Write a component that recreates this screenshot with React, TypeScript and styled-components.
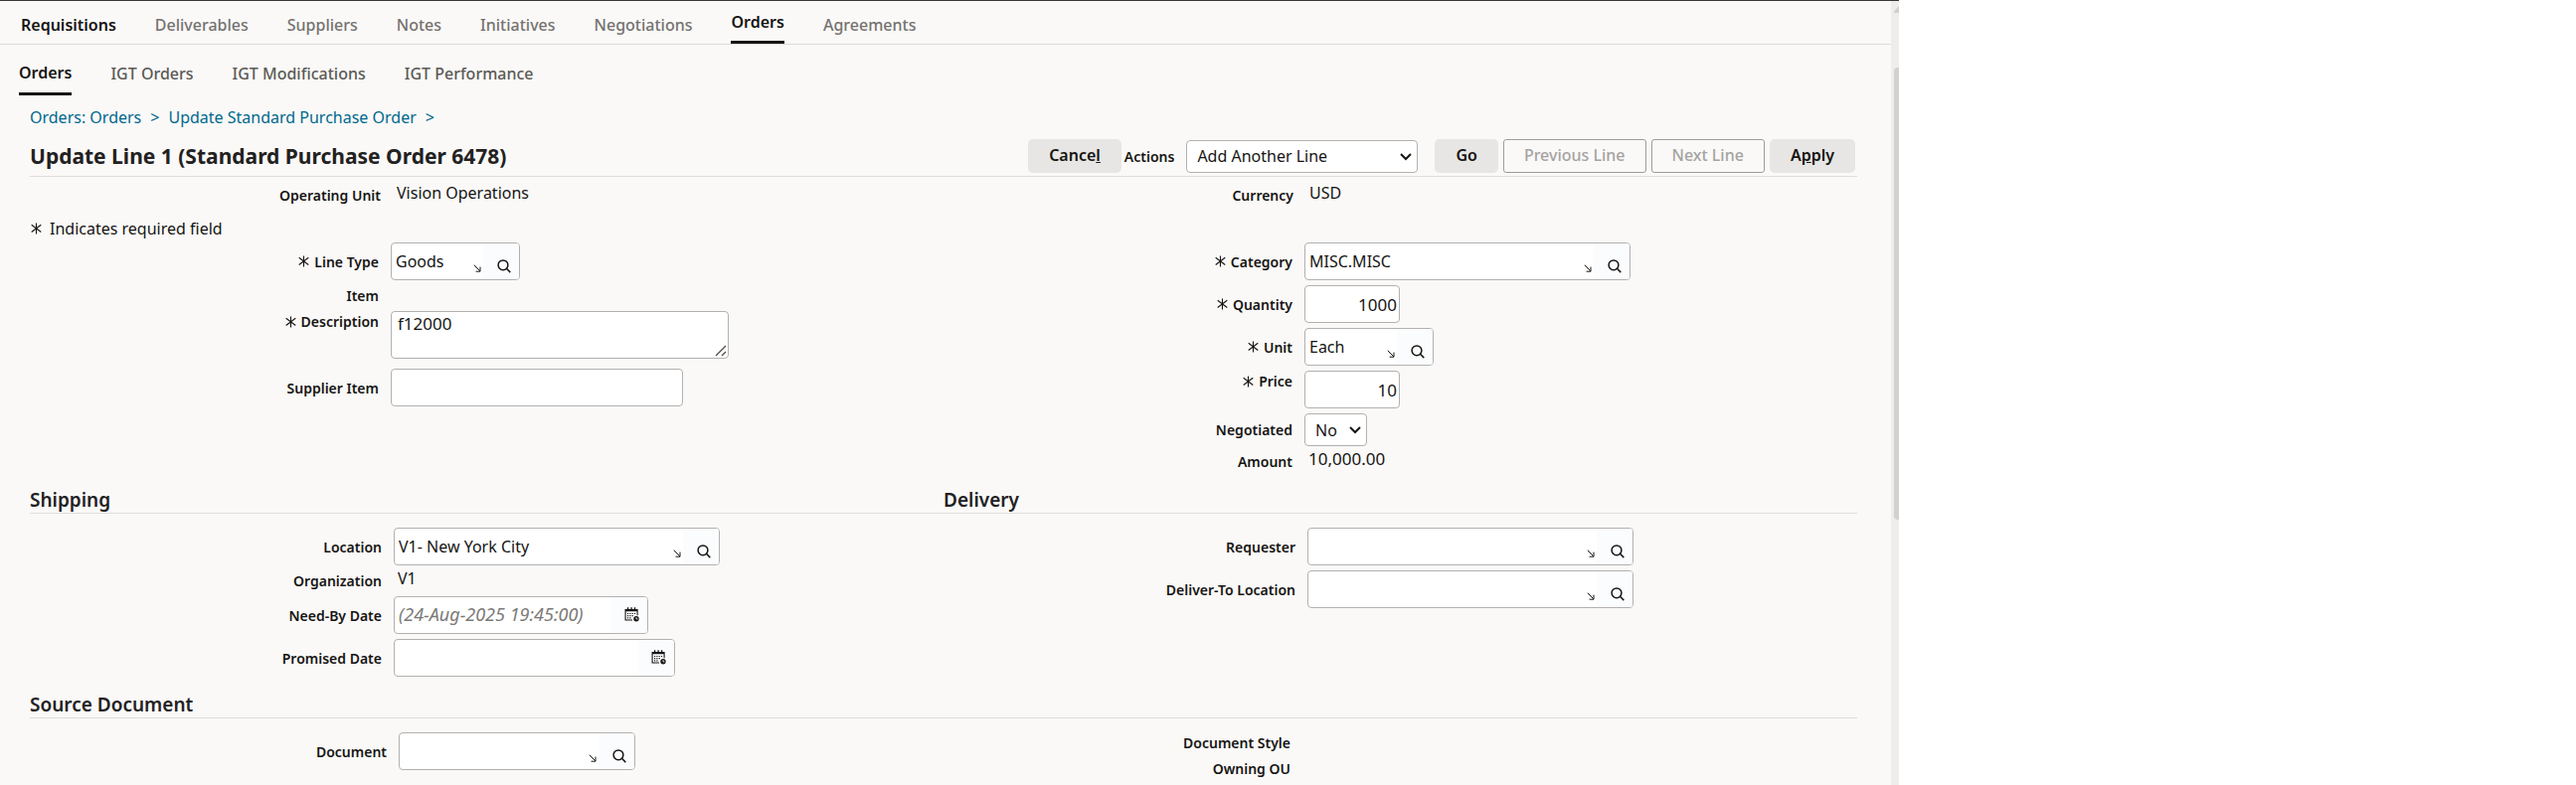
import React from 'react';
import styled, { createGlobalStyle, css } from 'styled-components';

const ink = '#161513';
const border = '#b3b1af';
const rule = '#dedddb';

const GlobalStyle = createGlobalStyle`
  *, *::before, *::after { box-sizing: border-box; }
  body {
    margin: 0;
    background: #ffffff;
    color: ${ink};
    font-family: "Noto Sans", "Open Sans", sans-serif;
    font-size: 16px;
    line-height: 20px;
  }
  button, input, select, textarea { font: inherit; color: inherit; margin: 0; }
  a { text-decoration: none; color: inherit; }
`;

const Shell = styled.div`
  display: flex;
  min-height: 100vh;
  max-width: 1910px;
  border-top: 1px solid #3a3636;
  background: #faf9f8;
`;

const Page = styled.div`
  flex: 1;
  min-width: 0;
`;

const Track = styled.div`
  display: flex;
  flex-direction: column;
  align-items: flex-end;
  width: 8px;
  padding-top: 5px;
  background: #eeedec;
`;

const TrackArrow = styled.svg`
  width: 5px;
  height: 7px;
  margin-bottom: 55px;
`;

const Thumb = styled.div`
  flex: 17;
  width: 5px;
  border-radius: 4px 0 0 4px;
  background: #d2d1cf;
`;

const TrackRest = styled.div`
  flex: 10;
`;

const TabBar = styled.nav`
  display: flex;
  gap: 39px;
  height: 44px;
  padding-left: 21px;
  border-bottom: 1px solid ${rule};
`;

const SubTabBar = styled.nav`
  display: flex;
  gap: 39px;
  height: 51px;
  padding-left: 19px;
`;

const Tab = styled.a<{ $active?: boolean; $strong?: boolean }>`
  padding-top: 14px;
  font-weight: 500;
  color: #75726f;
  white-space: nowrap;
  ${(p) => p.$strong && css`
    font-weight: 600;
    color: ${ink};
  `}
  ${(p) => p.$active && css`
    padding-top: 11px;
    border-bottom: 3px solid ${ink};
    font-weight: 600;
    color: ${ink};
  `}
`;

const SubTab = styled(Tab)`
  padding-top: ${(p) => (p.$active ? 18 : 19)}px;
  color: ${(p) => (p.$active ? ink : '#5b5956')};
`;

const Content = styled.main`
  padding: 12px 34px 0 30px;
`;

const Crumbs = styled.nav`
  display: flex;
  gap: 9px;
  color: #00688c;
`;

const Header = styled.header`
  display: flex;
  align-items: center;
  justify-content: space-between;
  margin-top: 12px;
  padding: 0 2px 3px 0;
  border-bottom: 1px solid ${rule};
`;

const Title = styled.h1`
  margin: 0;
  font-size: 21px;
  line-height: 34px;
  font-weight: 700;
  color: #22211f;
`;

const Actions = styled.div`
  display: flex;
  align-items: center;
  gap: 5px;
`;

const ActionPicker = styled.div`
  display: flex;
  align-items: center;
  gap: 12px;
  margin: 0 12px 0 -2px;
`;

const Button = styled.button`
  height: 34px;
  padding: 0 20px 2px;
  border: 1px solid transparent;
  border-radius: 5px;
  background: #e7e6e4;
  font-weight: 600;
  white-space: nowrap;

  &:disabled {
    border-color: #9f9d9b;
    border-radius: 3px;
    background: transparent;
    font-weight: 500;
    color: #a5a3a1;
  }
`;

const SelectFrame = styled.div<{ $width: number }>`
  position: relative;
  width: ${(p) => p.$width}px;
`;

const NativeSelect = styled.select`
  display: block;
  appearance: none;
  width: 100%;
  height: 33px;
  padding: 0 20px 0 10px;
  border: 1px solid ${border};
  border-radius: 4px;
  background: #ffffff;
`;

const Chevron = styled.svg`
  position: absolute;
  top: 13px;
  right: 6px;
  width: 12px;
  height: 8px;
  pointer-events: none;
`;

const Columns = styled.div<{ $top?: number }>`
  display: grid;
  grid-template-columns: 1fr 1fr;
  padding-top: ${(p) => p.$top ?? 14}px;
`;

const Column = styled.div<{ $label: number }>`
  --label-width: ${(p) => p.$label}px;
  display: flex;
  flex-direction: column;
  gap: 5px;
`;

const Row = styled.div<{ $align?: string }>`
  display: grid;
  grid-template-columns: var(--label-width) auto;
  justify-content: start;
  align-items: ${(p) => p.$align ?? 'center'};
  column-gap: 12px;
  min-height: 21px;
`;

const Label = styled.label`
  display: flex;
  align-items: center;
  justify-content: flex-end;
  gap: 5px;
  font-size: 14px;
  line-height: 21px;
  font-weight: 600;
  white-space: nowrap;
`;

const Value = styled.output`
  align-self: start;
  padding-left: 4px;
  line-height: 16px;
`;

const Amount = styled(Value)`
  font-size: 17px;
`;

const Note = styled.p`
  display: flex;
  align-items: center;
  gap: 8px;
  margin: 13px 0 4px;
  padding-left: 1px;
`;

const SectionHeads = styled.div`
  display: grid;
  grid-template-columns: 1fr 1fr;
  margin-top: 15px;
  border-bottom: 1px solid ${rule};
`;

const SectionTitle = styled.h2`
  margin: 0;
  font-size: 19px;
  line-height: 26px;
  font-weight: 600;
  color: #22211f;
`;

const Box = styled.div<{ $width: number }>`
  display: flex;
  width: ${(p) => p.$width}px;
  height: 38px;
  overflow: hidden;
  border: 1px solid ${border};
  border-radius: 4px;
  background: #ffffff;
`;

const BoxInput = styled.input`
  flex: 1;
  min-width: 0;
  padding: 0 4px;
  border: 0;
  outline: 0;
  background: transparent;

  &::placeholder {
    font-size: 18px;
    font-style: italic;
    color: #7b7976;
    opacity: 1;
  }
`;

const IconButton = styled.button<{ $low?: boolean }>`
  display: flex;
  align-items: ${(p) => (p.$low ? 'flex-end' : 'center')};
  justify-content: flex-end;
  width: 36px;
  padding: ${(p) => (p.$low ? '0 8px 6px 0' : '0 8px 2px 0')};
  border: 0;
  background: #fbfcfe;
`;

const Corner = styled.svg`
  align-self: flex-end;
  flex: none;
  width: 8px;
  height: 8px;
  margin: 0 2px 7px 0;
`;

const TextInput = styled.input<{ $width: number; $numeric?: boolean }>`
  width: ${(p) => p.$width}px;
  height: 38px;
  padding: 0 ${(p) => (p.$numeric ? 2 : 4)}px;
  border: 1px solid ${border};
  border-radius: 4px;
  background: #ffffff;
  font-size: ${(p) => (p.$numeric ? 17 : 16)}px;
  text-align: ${(p) => (p.$numeric ? 'right' : 'left')};
`;

const TextAreaFrame = styled.div`
  position: relative;
  margin-bottom: 5px;
`;

const TextArea = styled.textarea`
  display: block;
  width: 340px;
  height: 48px;
  padding: 2px 6px;
  border: 1px solid ${border};
  border-radius: 4px;
  background: #ffffff;
  font-size: 17px;
  resize: none;
`;

const Grip = styled.svg`
  position: absolute;
  right: 2px;
  bottom: 2px;
  width: 12px;
  height: 12px;
`;

const Star = () => (
  <svg width="11" height="12" viewBox="0 0 11 12" aria-hidden="true" fill="none" stroke={ink} strokeWidth="1.1">
    <path d="M5.5 0.5v11M0.7 2.3l9.6 7.2M10.3 2.3l-9.6 7.2" />
  </svg>
);

const SearchIcon = () => (
  <svg width="14" height="14" viewBox="0 0 14 14" aria-hidden="true" fill="none" stroke={ink} strokeWidth="1.5">
    <circle cx="6" cy="5.8" r="4.9" />
    <path d="M9.5 9.3l3.8 3.8" />
  </svg>
);

const CalendarIcon = () => (
  <svg width="15" height="15" viewBox="0 0 15 15" aria-hidden="true">
    <path d="M8 13H1.1V2.6h12v5.6" fill="none" stroke={ink} strokeWidth="1.1" />
    <path d="M1 3.6h12" stroke={ink} strokeWidth="1.4" />
    <path d="M3.6 0.3v3.4M7.1 0.3v3.4M10.6 0.3v3.4" stroke={ink} strokeWidth="1.3" />
    <path d="M3 6.5h8.8M3 8.7h6.6M3 10.9h4.6" stroke={ink} strokeWidth="1.2" strokeDasharray="1.2 1.1" />
    <circle cx="12" cy="11.8" r="2.7" fill={ink} />
    <path d="M12 10.2v1.8h1.4" fill="none" stroke="#fff" strokeWidth="0.8" />
  </svg>
);

interface FieldProps {
  id: string;
  label: string;
  required?: boolean;
  align?: string;
  children?: React.ReactNode;
}

const Field = ({ id, label, required, align, children }: FieldProps) => (
  <Row $align={align}>
    <Label htmlFor={id}>
      {required && <Star />}
      {label}
    </Label>
    {children ?? <Value id={id} />}
  </Row>
);

const Select = ({ id, width, options }: { id: string; width: number; options: string[] }) => (
  <SelectFrame $width={width}>
    <NativeSelect id={id}>
      {options.map((o) => (
        <option key={o}>{o}</option>
      ))}
    </NativeSelect>
    <Chevron viewBox="0 0 12 8" aria-hidden="true" fill="none" stroke={ink} strokeWidth="2">
      <path d="M1 1l5 5 5-5" />
    </Chevron>
  </SelectFrame>
);

const Lookup = ({ id, width, value = '' }: { id: string; width: number; value?: string }) => (
  <Box $width={width}>
    <BoxInput id={id} type="text" defaultValue={value} />
    <Corner viewBox="0 0 8 8" aria-hidden="true" fill="none" stroke={ink} strokeWidth="1">
      <path d="M0.8 0.8l6 6M7 2.6v4.6H2.6" />
    </Corner>
    <IconButton type="button" $low aria-label="Search">
      <SearchIcon />
    </IconButton>
  </Box>
);

const DateInput = ({ id, width, hint }: { id: string; width: number; hint?: string }) => (
  <Box $width={width}>
    <BoxInput id={id} type="text" placeholder={hint} />
    <IconButton type="button" aria-label="Pick date">
      <CalendarIcon />
    </IconButton>
  </Box>
);

const tabs = ['Requisitions', 'Deliverables', 'Suppliers', 'Notes', 'Initiatives', 'Negotiations', 'Orders', 'Agreements'];
const subTabs = ['Orders', 'IGT Orders', 'IGT Modifications', 'IGT Performance'];

export default function App() {
  return (
    <>
      <GlobalStyle />
      <Shell>
        <Page>
          <TabBar>
            {tabs.map((t) => (
              <Tab key={t} href="#" $active={t === 'Orders'} $strong={t === 'Requisitions'}>{t}</Tab>
            ))}
          </TabBar>
          <SubTabBar>
            {subTabs.map((t) => (
              <SubTab key={t} href="#" $active={t === 'Orders'}>{t}</SubTab>
            ))}
          </SubTabBar>
          <Content>
            <Crumbs>
              <a href="#">Orders: Orders</a>
              <span>&gt;</span>
              <a href="#">Update Standard Purchase Order</a>
              <span>&gt;</span>
            </Crumbs>
            <Header>
              <Title>Update Line 1 (Standard Purchase Order 6478)</Title>
              <Actions>
                <Button type="button">Cance<u>l</u></Button>
                <ActionPicker>
                  <Label htmlFor="actions">Actions</Label>
                  <Select id="actions" width={233} options={['Add Another Line']} />
                </ActionPicker>
                <Button type="button">Go</Button>
                <Button type="button" disabled>Previous Line</Button>
                <Button type="button" disabled>Next Line</Button>
                <Button type="button">A<u>p</u>ply</Button>
              </Actions>
            </Header>

            <Columns $top={8}>
              <Column $label={353}>
                <Field id="operating-unit" label="Operating Unit">
                  <Value id="operating-unit">Vision Operations</Value>
                </Field>
              </Column>
              <Column $label={352}>
                <Field id="currency" label="Currency">
                  <Value id="currency">USD</Value>
                </Field>
              </Column>
            </Columns>
            <Note><Star />Indicates required field</Note>
            <Columns $top={0}>
              <Column $label={351}>
                <Field id="line-type" label="Line Type" required>
                  <Lookup id="line-type" width={130} value="Goods" />
                </Field>
                <Field id="item" label="Item" />
                <Field id="description" label="Description" required align="start">
                  <TextAreaFrame>
                    <TextArea id="description" defaultValue="f12000" />
                    <Grip viewBox="0 0 12 12" aria-hidden="true" fill="none" stroke="#4d4b49" strokeWidth="1.3">
                      <path d="M1 11L11 1M7 11l4-4" />
                    </Grip>
                  </TextAreaFrame>
                </Field>
                <Field id="supplier-item" label="Supplier Item">
                  <TextInput id="supplier-item" type="text" $width={294} />
                </Field>
              </Column>
              <Column $label={351}>
                <Field id="category" label="Category" required>
                  <Lookup id="category" width={328} value="MISC.MISC" />
                </Field>
                <Field id="quantity" label="Quantity" required>
                  <TextInput id="quantity" type="text" $width={96} $numeric defaultValue="1000" />
                </Field>
                <Field id="unit" label="Unit" required>
                  <Lookup id="unit" width={130} value="Each" />
                </Field>
                <Field id="price" label="Price" required align="start">
                  <TextInput id="price" type="text" $width={96} $numeric defaultValue="10" />
                </Field>
                <Field id="negotiated" label="Negotiated">
                  <Select id="negotiated" width={63} options={['No', 'Yes']} />
                </Field>
                <Field id="amount" label="Amount">
                  <Amount id="amount">10,000.00</Amount>
                </Field>
              </Column>
            </Columns>

            <SectionHeads>
              <SectionTitle>Shipping</SectionTitle>
              <SectionTitle>Delivery</SectionTitle>
            </SectionHeads>
            <Columns>
              <Column $label={354}>
                <Field id="location" label="Location">
                  <Lookup id="location" width={328} value="V1- New York City" />
                </Field>
                <Field id="organization" label="Organization">
                  <Value id="organization">V1</Value>
                </Field>
                <Field id="need-by" label="Need-By Date">
                  <DateInput id="need-by" width={256} hint="(24-Aug-2025 19:45:00)" />
                </Field>
                <Field id="promised" label="Promised Date">
                  <DateInput id="promised" width={283} />
                </Field>
              </Column>
              <Column $label={354}>
                <Field id="requester" label="Requester">
                  <Lookup id="requester" width={328} />
                </Field>
                <Field id="deliver-to" label="Deliver-To Location">
                  <Lookup id="deliver-to" width={328} />
                </Field>
              </Column>
            </Columns>

            <SectionHeads>
              <SectionTitle>Source Document</SectionTitle>
            </SectionHeads>
            <Columns>
              <Column $label={359}>
                <Field id="document" label="Document">
                  <Lookup id="document" width={238} />
                </Field>
              </Column>
              <Column $label={349}>
                <Field id="document-style" label="Document Style" />
                <Field id="owning-ou" label="Owning OU" />
              </Column>
            </Columns>
          </Content>
        </Page>
        <Track aria-hidden="true">
          <TrackArrow viewBox="0 0 5 7">
            <path d="M5 0L0 5.5V7h5z" fill="#d2d1cf" />
          </TrackArrow>
          <Thumb />
          <TrackRest />
        </Track>
      </Shell>
    </>
  );
}
